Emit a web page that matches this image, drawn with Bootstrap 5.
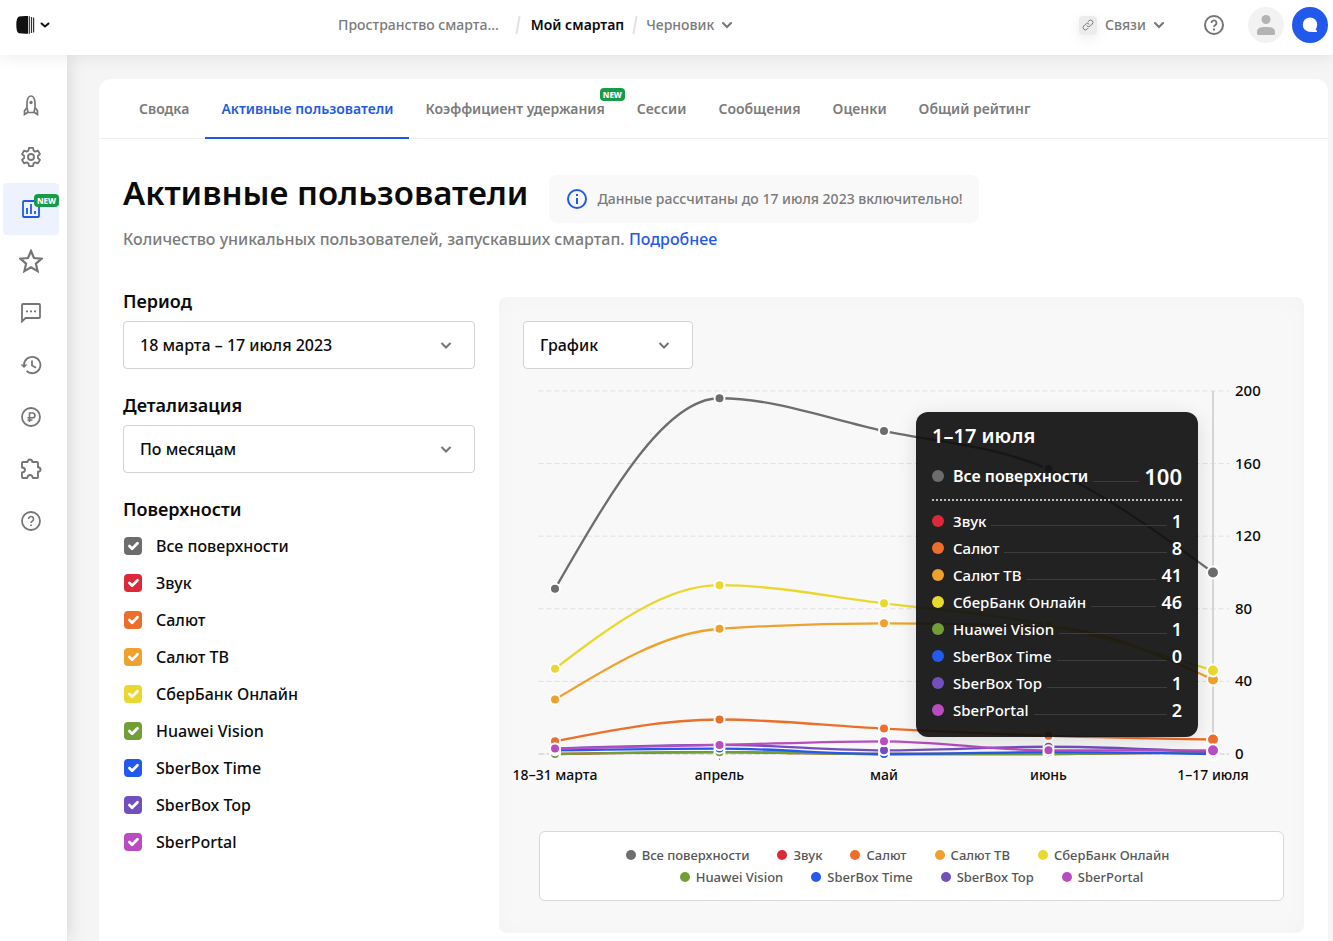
<!DOCTYPE html>
<html lang="ru">
<head>
<meta charset="utf-8">
<meta name="viewport" content="width=device-width, initial-scale=1">
<title>Активные пользователи</title>
<link href="https://cdn.jsdelivr.net/npm/bootstrap@5.3.0/dist/css/bootstrap.min.css" rel="stylesheet">
<style>
:root{--ink:#0b0b0b;--muted:#7b7b7b;--blue:#1f5ae6;--green:#189b48}
body{font-family:"Noto Sans",sans-serif;font-size:16px;font-weight:500;line-height:24px;color:var(--ink);background:#f5f5f5}
a{text-decoration:none}
.topbar{height:55px;padding:0 5px 5px 16px;box-shadow:0 2px 16px rgba(0,0,0,.08);z-index:2;font-size:14px}
.topbar a,.topbar button{color:var(--muted);font-weight:500}
.topbar .current{color:var(--ink);font-weight:600}
.slash{width:2px;height:18px;background:#e2e2e2;margin:0 12px 0 18px;transform:rotate(10deg)}
.slash.tight{margin:0 10px}
.plain{border:0;background:none;padding:0}
.brand-toggle{width:322px}
.link-chip{width:18px;height:19px;border-radius:4px;background:#ececec;box-shadow:0 4px 14px rgba(0,0,0,.08)}
.round{width:36px;height:36px}
.round.grey{background:#f2f2f2}
.round.blue{background:#2159ec}
.sidebar{width:67px;flex:none;padding:24px 0 0 3px;box-shadow:0 0 18px rgba(0,0,0,.14);z-index:1}
.side-link{width:56px;height:52px;border-radius:4px;color:#757575}
.side-link.on{background:#edf2fe;color:var(--blue)}
.new-tag{background:var(--green);color:#fff;font-size:8px;font-weight:800;line-height:13px;width:25px;height:13px;border-radius:4px;text-align:center}
.side-link .new-tag{top:11px;right:0}
.workspace{padding:24px 5px 0 32px;min-width:0}
.sheet{border-radius:12px 12px 0 0}
.tabs{border-bottom:1px solid #efefef;padding-left:24px;height:60px;font-size:14px;font-weight:600}
.tabs a{padding:0 16px;line-height:59px;height:60px;color:var(--muted);white-space:nowrap}
.tabs a.on{color:var(--blue);border-bottom:2px solid var(--blue)}
.tabs .new-tag{top:9px;right:-4px}
.content{padding:36px 24px 8px}
.heading{gap:21px}
h1{font-size:33px;line-height:36px;font-weight:600}
.notice{background:#f9f9f9;border-radius:8px;height:48px;padding:0 16px 0 18px;gap:10px;font-size:14px;color:var(--muted)}
.intro{color:var(--muted);margin:4px 0 38px}
.intro a{color:var(--blue)}
.filters{width:352px;flex:none}
.caption{font-size:18px;line-height:24px;font-weight:600;margin-bottom:8px;display:block}
legend.caption{margin-bottom:6px}
.picker{height:48px;border:1px solid #d3d3d3;border-radius:4px;font-size:16px;font-weight:500;color:var(--ink);padding:0 44px 0 16px;background:#fff url("data:image/svg+xml,%3Csvg xmlns='http://www.w3.org/2000/svg' viewBox='0 0 12 12'%3E%3Cpath d='M1.5 4l4.500 4.500L10.500 4' fill='none' stroke='%23757575' stroke-width='2'/%3E%3C/svg%3E") no-repeat right 22px center/12px}
.picker.view{width:170px}
.tick{height:37px;min-height:0;padding:0 0 0 1px;margin:0;gap:14px}
.form-check.tick .form-check-input{float:none;margin:0;width:18px;height:18px;border-radius:4px;border:0;background-color:var(--c)}
.panel-box{margin-top:8px;padding-top:24px;padding-bottom:32px;background:#f8f8f8;border-radius:8px;box-shadow:inset 0 0 24px rgba(0,0,0,.025)}
.chart{display:block;width:100%;height:auto}
.chart text{font-size:14px;fill:var(--ink);font-weight:500}
.chart .scale{font-size:15px}
.legend-box{margin:0 20px 0 40px;border:1px solid #d8d8d8;border-radius:6px;padding:12px 16px;font-size:13px;line-height:22px;color:#565656}
.legend-box ul{gap:0 28px}
.legend-box li{gap:6px}
.legend-box .first{padding-right:28px}
.dot{width:10px;height:10px;border-radius:50%;background:var(--c);flex:none}
.tip{right:106px;top:115px;width:282px;height:325px;padding:12px 16px;border-radius:12px;background:rgba(15,15,15,.92);color:#fff;font-size:15px;box-shadow:0 4px 20px rgba(0,0,0,.12)}
.tip h2{font-size:20px;line-height:24px;font-weight:600;margin:0 0 13px}
.tip dl{margin:0}
.tip .line{height:27px}
.tip dt{font-weight:500}
.tip dd{margin:0;font-size:18px;font-weight:600}
.tip .dot{width:12px;height:12px;margin-right:9px}
.tip i{flex:1;border-bottom:1px solid #3d3d3d;height:11px;margin:0 5px}
.tip .total{height:40px;border-bottom:2px dotted #bdbdbd;margin-bottom:6px;padding-bottom:8px}
.tip .total dt{font-weight:600;font-size:16px}
.tip .total dd{font-size:22px}
.c-all{--c:#6d6d6d}.c-zvuk{--c:#dc2838}.c-salut{--c:#ec6e2a}.c-tv{--c:#f0a12d}.c-bank{--c:#ead830}.c-hua{--c:#729e38}.c-time{--c:#2359ec}.c-top{--c:#734fbe}.c-portal{--c:#b94cc0}
</style>
</head>
<body class="min-vh-100 d-flex flex-column">
<header class="topbar bg-white d-flex align-items-center position-relative">
  <div class="brand-toggle">
    <button class="plain d-flex align-items-center gap-1" aria-label="Меню">
      <svg width="20" height="20" viewBox="0 0 20 20"><path d="M3 1.500Q7 .8 12 1.100V18.700Q7 18.900 3 18.300 .3 17.500 .3 10T3 1.500z" fill="#111"/><path d="M13.300 1.300v17.400M15.500 2v16M17.600 2.500v15" stroke="#333" stroke-width="1.200"/></svg>
      <svg width="10" height="10" viewBox="0 0 10 10"><path d="M1.500 3.500L5 6.500l3.500-3" fill="none" stroke="#111" stroke-width="2" stroke-linecap="round"/></svg>
    </button>
  </div>
  <nav class="d-flex align-items-center" aria-label="Путь">
    <a href="#">Пространство смарта…</a><span class="slash"></span><a href="#" class="current">Мой смартап</a><span class="slash tight"></span>
    <button class="plain d-flex align-items-center gap-2">Черновик<svg width="10" height="10" viewBox="0 0 10 10"><path d="M1 3l4 4 4-4" fill="none" stroke="#757575" stroke-width="2" stroke-linecap="round"/></svg></button>
  </nav>
  <div class="d-flex align-items-center ms-auto">
    <button class="plain d-flex align-items-center gap-2 me-4"><span class="link-chip d-flex align-items-center justify-content-center"><svg width="12" height="12" viewBox="0 0 24 24" fill="none" stroke="#777" stroke-width="1.900" stroke-linecap="round"><path d="M10 14a4.500 4.500 0 0 0 6.500 0l4-4a4.500 4.500 0 0 0-6.500-6.500l-2 2M14 10a4.500 4.500 0 0 0-6.500 0l-4 4a4.500 4.500 0 0 0 6.500 6.500l2-2"/></svg></span>Связи<svg width="10" height="10" viewBox="0 0 10 10"><path d="M1 3l4 4 4-4" fill="none" stroke="#757575" stroke-width="2" stroke-linecap="round"/></svg></button>
    <button class="plain mx-3 d-flex" aria-label="Помощь"><svg width="20" height="20" viewBox="0 0 20 20" fill="none" stroke="#757575" stroke-width="2"><circle cx="10" cy="10" r="9"/><path d="M7.500 8a2.500 2.500 0 1 1 3.800 2.100c-.9.600-1.300 1-1.300 1.900" stroke-width="1.800"/><path d="M10 13.500v2"/></svg></button>
    <button class="plain round grey rounded-circle ms-2 me-2 d-flex align-items-center justify-content-center" aria-label="Профиль"><svg width="20" height="22" viewBox="0 0 20 22" fill="#b3b3b3"><circle cx="10" cy="5.500" r="4.500"/><path d="M1 18c0-4 3-5 9-5s9 1 9 5v1.500q0 1.500-1.500 1.500h-15Q1 21 1 19.500z"/></svg></button>
    <button class="plain round blue rounded-circle d-flex align-items-center justify-content-center" aria-label="Чат"><svg width="16" height="16" viewBox="0 0 16 16" fill="#fff"><circle cx="8" cy="7.700" r="7.200"/><path d="M8 14.900h6.500q1 0 .4-.8l-1-1.800z"/></svg></button>
  </div>
</header>
<div class="d-flex flex-grow-1">
  <nav class="sidebar bg-white d-flex flex-column" aria-label="Разделы">
    <a href="#" class="side-link d-flex align-items-center justify-content-center" aria-label="Запуск"><svg width="18" height="22" viewBox="0 0 18 22" fill="none" stroke="currentColor" stroke-width="1.700"><path d="M6 18.500C4 12 4.500 2 9 2s5 10 3 16.500z"/><circle cx="9" cy="8.500" r="1.700" fill="currentColor" stroke="none"/><path d="M4.500 14L2.500 17v3.500l3-2M13.500 14l2 3v3.500l-3-2"/></svg></a>
    <a href="#" class="side-link d-flex align-items-center justify-content-center" aria-label="Настройки"><svg width="22" height="22" viewBox="0 0 24 24" fill="none" stroke="currentColor" stroke-width="2" stroke-linejoin="round"><path d="M9.800 2h4.400l.6 3 1.900 1.100 2.900-1 2.200 3.800-2.300 2v2.200l2.300 2-2.200 3.800-2.900-1-1.900 1.100-.6 3H9.800l-.6-3-1.900-1.100-2.900 1-2.200-3.800 2.300-2v-2.200l-2.300-2 2.200-3.800 2.900 1L9.200 5z"/><circle cx="12" cy="12" r="3.300"/></svg></a>
    <a href="#" class="side-link on position-relative d-flex align-items-center justify-content-center" aria-label="Аналитика"><svg width="18" height="18" viewBox="0 0 18 18" fill="none" stroke="currentColor" stroke-width="1.800"><rect x="1" y="1" width="16" height="16" rx="1"/><path d="M5 14V8M9 14V4M13 14v-3"/></svg><span class="new-tag position-absolute">NEW</span></a>
    <a href="#" class="side-link d-flex align-items-center justify-content-center" aria-label="Избранное"><svg width="24" height="24" viewBox="0 0 24 24" fill="none" stroke="currentColor" stroke-width="2.200"><path d="M12 2l3 7 7.600.7-5.700 5 1.700 7.400L12 18.200l-6.600 3.900 1.700-7.400-5.700-5L9 9z"/></svg></a>
    <a href="#" class="side-link d-flex align-items-center justify-content-center" aria-label="Сообщения"><svg width="20" height="20" viewBox="0 0 20 20" fill="none" stroke="currentColor" stroke-width="1.800"><path d="M1 18.500V2q0-1 1-1h16q1 0 1 1v12q0 1-1 1H4.500z"/><path d="M5 8.300h2M9 8.300h2M13 8.300h2"/></svg></a>
    <a href="#" class="side-link d-flex align-items-center justify-content-center" aria-label="История"><svg width="22" height="20" viewBox="0 0 22 20" fill="none" stroke="currentColor" stroke-width="1.800"><path d="M4 10a8.200 8.200 0 1 1 2.600 6"/><path d="M.5 9.500h7L4 13z" fill="currentColor" stroke="none"/><path d="M12 5.500V10.500l4 2.300"/></svg></a>
    <a href="#" class="side-link d-flex align-items-center justify-content-center" aria-label="Монетизация"><svg width="20" height="20" viewBox="0 0 20 20" fill="none" stroke="currentColor" stroke-width="1.800"><circle cx="10" cy="10" r="9"/><path d="M8.500 15V6h3a2.400 2.400 0 0 1 0 4.800H6.500M6.500 13h5" stroke-width="1.600"/></svg></a>
    <a href="#" class="side-link d-flex align-items-center justify-content-center" aria-label="Интеграции"><svg width="22" height="22" viewBox="0 0 22 22" fill="none" stroke="currentColor" stroke-width="1.900" stroke-linejoin="round"><path d="M3 4h4.500C7.500 .6 12.300 .6 12.300 4H17q1 0 1 1v4.200c3.400 .3 3.400 4.200 0 4.500V19q0 1-1 1h-4.200c-.5-4-5-4-5.500 0H3q-1 0-1-1v-4.500c4-.4 4-4.600 0-5V5q0-1 1-1z"/></svg></a>
    <a href="#" class="side-link d-flex align-items-center justify-content-center" aria-label="Справка"><svg width="20" height="20" viewBox="0 0 20 20" fill="none" stroke="currentColor" stroke-width="1.800"><circle cx="10" cy="10" r="9"/><path d="M7.500 8a2.500 2.500 0 1 1 3.800 2.100c-.9.600-1.300 1-1.300 1.900" stroke-width="1.600"/><path d="M10 13.500v1.500"/></svg></a>
  </nav>
  <main class="workspace flex-grow-1 d-flex flex-column">
    <div class="sheet bg-white flex-grow-1">
      <nav class="tabs d-flex" aria-label="Отчёты">
        <a href="#">Сводка</a><a href="#" class="on" aria-current="page">Активные пользователи</a><a href="#" class="position-relative">Коэффициент удержания<span class="new-tag position-absolute">NEW</span></a><a href="#">Сессии</a><a href="#">Сообщения</a><a href="#">Оценки</a><a href="#">Общий рейтинг</a>
      </nav>
      <div class="content">
        <div class="heading d-flex align-items-start">
          <h1 class="m-0">Активные пользователи</h1>
          <div class="notice d-flex align-items-center"><svg width="20" height="20" viewBox="0 0 20 20" fill="none" stroke="#2159ec" stroke-width="2"><circle cx="10" cy="10" r="9"/><path d="M10 9v6M10 5v2"/></svg><span>Данные рассчитаны до 17 июля 2023 включительно!</span></div>
        </div>
        <p class="intro">Количество уникальных пользователей, запускавших смартап. <a href="#">Подробнее</a></p>
        <div class="d-flex gap-4">
          <form class="filters">
            <label class="caption" for="period">Период</label>
            <select class="form-select picker mb-4" id="period"><option>18 марта – 17 июля 2023</option></select>
            <label class="caption" for="step">Детализация</label>
            <select class="form-select picker mb-4" id="step"><option>По месяцам</option></select>
            <fieldset>
              <legend class="caption">Поверхности</legend>
              <div class="form-check tick d-flex align-items-center c-all"><input class="form-check-input" type="checkbox" id="s0" checked><label for="s0">Все поверхности</label></div>
              <div class="form-check tick d-flex align-items-center c-zvuk"><input class="form-check-input" type="checkbox" id="s1" checked><label for="s1">Звук</label></div>
              <div class="form-check tick d-flex align-items-center c-salut"><input class="form-check-input" type="checkbox" id="s2" checked><label for="s2">Салют</label></div>
              <div class="form-check tick d-flex align-items-center c-tv"><input class="form-check-input" type="checkbox" id="s3" checked><label for="s3">Салют ТВ</label></div>
              <div class="form-check tick d-flex align-items-center c-bank"><input class="form-check-input" type="checkbox" id="s4" checked><label for="s4">СберБанк Онлайн</label></div>
              <div class="form-check tick d-flex align-items-center c-hua"><input class="form-check-input" type="checkbox" id="s5" checked><label for="s5">Huawei Vision</label></div>
              <div class="form-check tick d-flex align-items-center c-time"><input class="form-check-input" type="checkbox" id="s6" checked><label for="s6">SberBox Time</label></div>
              <div class="form-check tick d-flex align-items-center c-top"><input class="form-check-input" type="checkbox" id="s7" checked><label for="s7">SberBox Top</label></div>
              <div class="form-check tick d-flex align-items-center c-portal"><input class="form-check-input" type="checkbox" id="s8" checked><label for="s8">SberPortal</label></div>
            </fieldset>
          </form>
          <section class="panel-box flex-grow-1 position-relative">
            <select class="form-select picker view ms-4" aria-label="Вид"><option>График</option></select>
            <svg class="chart" id="chart" viewBox="0 0 805 462" role="img" aria-label="Активные пользователи по месяцам"></svg>
            <div class="legend-box bg-white">
              <ul class="list-unstyled d-flex justify-content-center m-0 first">
                <li class="d-flex align-items-center c-all"><span class="dot"></span>Все поверхности</li><li class="d-flex align-items-center c-zvuk"><span class="dot"></span>Звук</li><li class="d-flex align-items-center c-salut"><span class="dot"></span>Салют</li><li class="d-flex align-items-center c-tv"><span class="dot"></span>Салют ТВ</li><li class="d-flex align-items-center c-bank"><span class="dot"></span>СберБанк Онлайн</li>
              </ul>
              <ul class="list-unstyled d-flex justify-content-center m-0">
                <li class="d-flex align-items-center c-hua"><span class="dot"></span>Huawei Vision</li><li class="d-flex align-items-center c-time"><span class="dot"></span>SberBox Time</li><li class="d-flex align-items-center c-top"><span class="dot"></span>SberBox Top</li><li class="d-flex align-items-center c-portal"><span class="dot"></span>SberPortal</li>
              </ul>
            </div>
            <div class="tip position-absolute" role="tooltip">
              <h2>1–17 июля</h2>
              <dl>
                <div class="line total d-flex align-items-center c-all"><span class="dot"></span><dt>Все поверхности</dt><i></i><dd>100</dd></div>
                <div class="line d-flex align-items-center c-zvuk"><span class="dot"></span><dt>Звук</dt><i></i><dd>1</dd></div>
                <div class="line d-flex align-items-center c-salut"><span class="dot"></span><dt>Салют</dt><i></i><dd>8</dd></div>
                <div class="line d-flex align-items-center c-tv"><span class="dot"></span><dt>Салют ТВ</dt><i></i><dd>41</dd></div>
                <div class="line d-flex align-items-center c-bank"><span class="dot"></span><dt>СберБанк Онлайн</dt><i></i><dd>46</dd></div>
                <div class="line d-flex align-items-center c-hua"><span class="dot"></span><dt>Huawei Vision</dt><i></i><dd>1</dd></div>
                <div class="line d-flex align-items-center c-time"><span class="dot"></span><dt>SberBox Time</dt><i></i><dd>0</dd></div>
                <div class="line d-flex align-items-center c-top"><span class="dot"></span><dt>SberBox Top</dt><i></i><dd>1</dd></div>
                <div class="line d-flex align-items-center c-portal"><span class="dot"></span><dt>SberPortal</dt><i></i><dd>2</dd></div>
              </dl>
            </div>
          </section>
        </div>
      </div>
    </div>
  </main>
</div>
<script src="https://cdn.jsdelivr.net/npm/bootstrap@5.3.0/dist/js/bootstrap.bundle.min.js"></script>
<script>
const months = ['18–31 марта', 'апрель', 'май', 'июнь', '1–17 июля'];
const series = [
  ['#6d6d6d', [91, 196, 178, 157, 100]],
  ['#dc2838', [0, 1, 0, 0, 1]],
  ['#ec6e2a', [7, 19, 14, 10, 8]],
  ['#f0a12d', [30, 69, 72, 70, 41]],
  ['#ead830', [47, 93, 83, 71, 46]],
  ['#729e38', [0, 1, 0, 0, 1]],
  ['#2359ec', [2, 3, 0, 1, 0]],
  ['#734fbe', [3, 5, 2, 4, 1]],
  ['#b94cc0', [3, 5, 7, 2, 2]]
];
const step = 164.5, px = i => 56 + i * step, py = v => 385 - v * 1.815;
let out = '';
for (let v = 0; v <= 200; v += 40) {
  out += `<path d="M39.5 ${py(v)}H730" stroke="#dedede" stroke-width="${v ? 1 : 2}" stroke-dasharray="${v ? '5 3' : '6 2'}"/><text class="scale" x="736" y="${py(v) + 5}">${v}</text>`;
}
months.forEach((m, i) => { out += `<path d="M${px(i)} 385v6" stroke="#999"/><text x="${px(i)}" y="411" text-anchor="middle">${m}</text>`; });
out += `<path d="M${px(4)} 22V385" stroke="#d6d6d6" stroke-width="2"/>`;
// Monotone cubic interpolation between monthly values
function curve(v) {
  const s = v.slice(1).map((b, i) => b - v[i]);
  const m = v.map((_, i) => i && i < 4 ? (Math.sign(s[i - 1]) + Math.sign(s[i])) * Math.min(Math.abs(s[i - 1]), Math.abs(s[i]), Math.abs(s[i - 1] + s[i]) / 4) : 0);
  m[0] = (3 * s[0] - m[1]) / 2;
  m[4] = (3 * s[3] - m[3]) / 2;
  let d = `M${px(0)} ${py(v[0])}`;
  for (let i = 0; i < 4; i++) d += `C${px(i + 1 / 3)} ${py(v[i] + m[i] / 3)} ${px(i + 2 / 3)} ${py(v[i + 1] - m[i + 1] / 3)} ${px(i + 1)} ${py(v[i + 1])}`;
  return d;
}
series.forEach(([c, v]) => {
  out += `<path d="${curve(v)}" fill="none" stroke="${c}" stroke-width="2.300"/>`;
  v.forEach((n, i) => { out += `<circle cx="${px(i)}" cy="${py(n)}" r="${i < 4 ? 5 : 6}" fill="${c}" stroke="#fff" stroke-width="2"/>`; });
});
document.getElementById('chart').innerHTML = out;
</script>
</body>
</html>
